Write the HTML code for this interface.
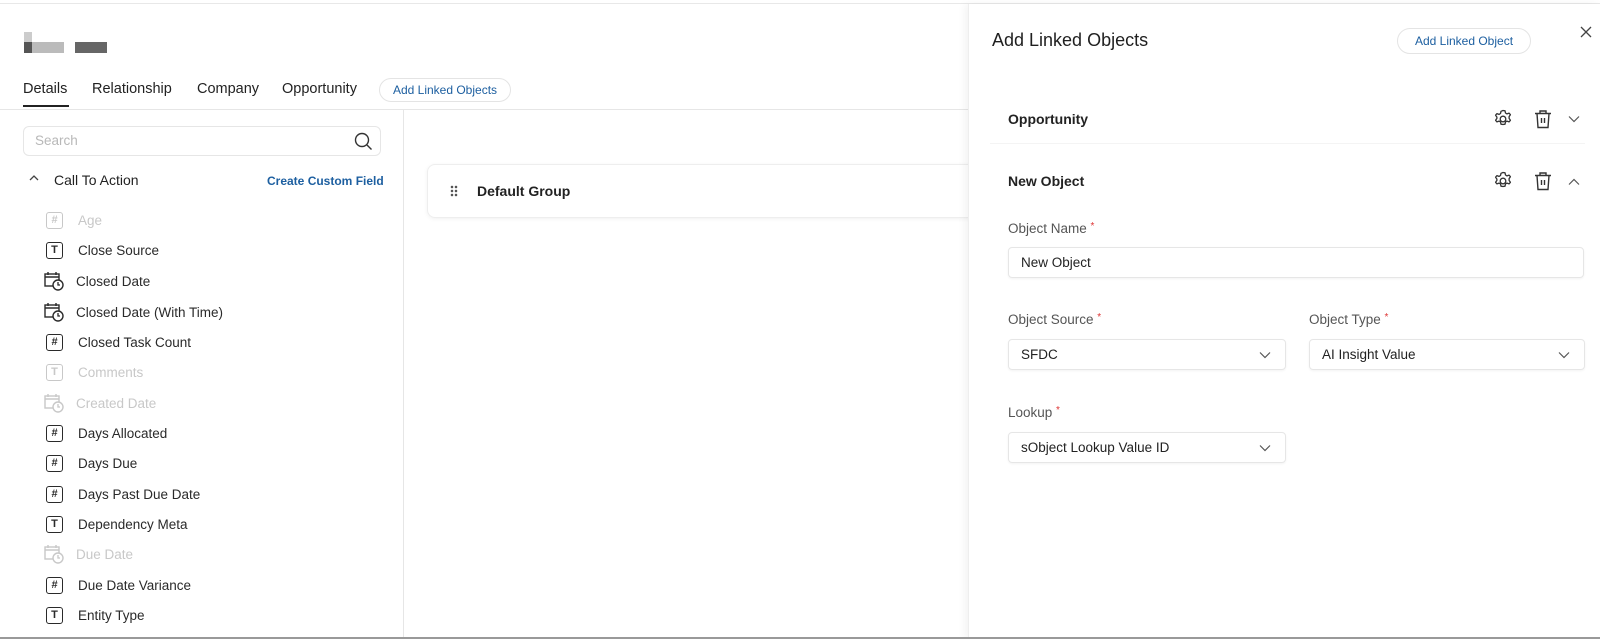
<!DOCTYPE html>
<html><head><meta charset="utf-8"><style>
*{margin:0;padding:0;box-sizing:border-box}
body{width:1600px;height:639px;overflow:hidden;background:#fff;font-family:"Liberation Sans",sans-serif;color:#1f1f1f;position:relative}
.a{position:absolute}
.tab{position:absolute;top:81px;font-size:14.5px;color:#222}
.item{position:absolute;left:46px;height:20px;display:flex;align-items:center;font-size:13.5px;color:#2a2a2a}
.item.dim{color:#c8c8c8}
.ic{width:17px;height:17px;border:1.5px solid currentColor;border-radius:3px;display:flex;align-items:center;justify-content:center;font-size:11px;font-weight:bold;margin-right:15px}
.cal{width:20px;height:20px;margin-right:12px;margin-left:-2px}
.lbl{position:absolute;font-size:13.5px;color:#555}
.lbl b{color:#d33;font-weight:normal;font-size:10px;vertical-align:top}
.inp{position:absolute;height:31px;border:1px solid #e6e6e6;border-radius:4px;font-size:13.5px;color:#222;padding-left:12px;line-height:29px;box-shadow:0 1px 2px rgba(0,0,0,.05)}
.chev{position:absolute;right:14px;top:11px}
</style></head><body>
<div class="a" style="left:0;top:3px;width:1600px;height:1px;background:#e8e8e8"></div>
<div class="a" style="left:24px;top:32px;width:8px;height:21px;background:#ccc"></div>
<div class="a" style="left:24px;top:42px;width:8px;height:11px;background:#555"></div>
<div class="a" style="left:32px;top:42px;width:32px;height:11px;background:#bbb"></div>
<div class="a" style="left:75px;top:42px;width:32px;height:11px;background:#666"></div>
<div class="tab" style="left:23px">Details</div>
<div class="a" style="left:23px;top:105px;width:46px;height:2px;background:#222"></div>
<div class="tab" style="left:92px">Relationship</div>
<div class="tab" style="left:197px">Company</div>
<div class="tab" style="left:282px">Opportunity</div>
<div class="a" style="left:379px;top:78px;width:132px;height:24px;border:1px solid #e4e4e4;border-radius:12px;font-size:12px;color:#1d5fa0;text-align:center;line-height:22px">Add Linked Objects</div>
<div class="a" style="left:0;top:109px;width:970px;height:1px;background:#e6e6e6"></div>
<div class="a" style="left:403px;top:110px;width:1px;height:529px;background:#e6e6e6"></div>
<div class="a" style="left:23px;top:126px;width:358px;height:30px;border:1px solid #e6e6e6;border-radius:6px;font-size:13.5px;color:#b8b8b8;padding-left:11px;line-height:28px">Search
<svg class="a" style="right:7px;top:5px" width="19" height="19" viewBox="0 0 19 19"><circle cx="8" cy="8" r="6.5" fill="none" stroke="#333" stroke-width="1.4"/><path d="M13 13l4.5 4.5" stroke="#333" stroke-width="1.4"/></svg></div>
<svg class="a" style="left:29px;top:174px" width="10" height="8"><path d="M1 6l4-4 4 4" fill="none" stroke="#444" stroke-width="1.3"/></svg>
<div class="a" style="left:54px;top:172px;font-size:14px;color:#222">Call To Action</div>
<div class="a" style="left:267px;top:174px;font-size:12px;color:#1d5fa0;font-weight:bold">Create Custom Field</div>

<div class="item dim" style="top:210px"><span class="ic">#</span>Age</div>
<div class="item" style="top:240px"><span class="ic">T</span>Close Source</div>
<div class="item" style="top:271px"><svg class="cal" viewBox="0 0 20 20"><rect x="1" y="3" width="14" height="12" fill="none" stroke="currentColor" stroke-width="1.4"/><path d="M1 6h14M4 1v3M12 1v3" stroke="currentColor" stroke-width="1.4"/><circle cx="14" cy="14" r="5" fill="#fff" stroke="currentColor" stroke-width="1.4"/><path d="M14 11v3h2" fill="none" stroke="currentColor" stroke-width="1.3"/></svg>Closed Date</div>
<div class="item" style="top:302px"><svg class="cal" viewBox="0 0 20 20"><rect x="1" y="3" width="14" height="12" fill="none" stroke="currentColor" stroke-width="1.4"/><path d="M1 6h14M4 1v3M12 1v3" stroke="currentColor" stroke-width="1.4"/><circle cx="14" cy="14" r="5" fill="#fff" stroke="currentColor" stroke-width="1.4"/><path d="M14 11v3h2" fill="none" stroke="currentColor" stroke-width="1.3"/></svg>Closed Date (With Time)</div>
<div class="item" style="top:332px"><span class="ic">#</span>Closed Task Count</div>
<div class="item dim" style="top:362px"><span class="ic">T</span>Comments</div>
<div class="item dim" style="top:393px"><svg class="cal" viewBox="0 0 20 20"><rect x="1" y="3" width="14" height="12" fill="none" stroke="currentColor" stroke-width="1.4"/><path d="M1 6h14M4 1v3M12 1v3" stroke="currentColor" stroke-width="1.4"/><circle cx="14" cy="14" r="5" fill="#fff" stroke="currentColor" stroke-width="1.4"/><path d="M14 11v3h2" fill="none" stroke="currentColor" stroke-width="1.3"/></svg>Created Date</div>
<div class="item" style="top:423px"><span class="ic">#</span>Days Allocated</div>
<div class="item" style="top:453px"><span class="ic">#</span>Days Due</div>
<div class="item" style="top:484px"><span class="ic">#</span>Days Past Due Date</div>
<div class="item" style="top:514px"><span class="ic">T</span>Dependency Meta</div>
<div class="item dim" style="top:544px"><svg class="cal" viewBox="0 0 20 20"><rect x="1" y="3" width="14" height="12" fill="none" stroke="currentColor" stroke-width="1.4"/><path d="M1 6h14M4 1v3M12 1v3" stroke="currentColor" stroke-width="1.4"/><circle cx="14" cy="14" r="5" fill="#fff" stroke="currentColor" stroke-width="1.4"/><path d="M14 11v3h2" fill="none" stroke="currentColor" stroke-width="1.3"/></svg>Due Date</div>
<div class="item" style="top:575px"><span class="ic">#</span>Due Date Variance</div>
<div class="item" style="top:605px"><span class="ic">T</span>Entity Type</div>

<div class="a" style="left:427px;top:164px;width:560px;height:54px;border:1px solid #eee;border-radius:8px;box-shadow:0 1px 4px rgba(0,0,0,.06)"></div>
<div class="a" style="left:450px;top:185px;width:8px;height:12px;background-image:radial-gradient(circle,#555 1.2px,transparent 1.4px);background-size:4px 4px"></div>
<div class="a" style="left:477px;top:183px;font-size:14px;font-weight:bold;color:#222">Default Group</div>

<div class="a" style="left:968px;top:4px;width:632px;height:635px;background:#fff;border-left:1px solid #eee;box-shadow:-3px 0 8px rgba(0,0,0,.05)"></div>
<div class="a" style="left:992px;top:30px;font-size:18px;color:#1f1f1f">Add Linked Objects</div>
<div class="a" style="left:1397px;top:28px;width:134px;height:26px;border:1px solid #e4e4e4;border-radius:13px;font-size:12px;color:#1d5fa0;text-align:center;line-height:24px">Add Linked Object</div>
<svg class="a" style="left:1580px;top:26px" width="12" height="12"><path d="M1 1l10 10M11 1L1 11" stroke="#444" stroke-width="1.3"/></svg>

<div class="a" style="left:1008px;top:111px;font-size:14px;font-weight:bold;color:#222">Opportunity</div>
<div class="a" style="left:990px;top:143px;width:595px;height:1px;background:#f4f4f4"></div>
<div class="a" style="left:1008px;top:173px;font-size:14px;font-weight:bold;color:#222">New Object</div>

<svg class="a" style="left:1493px;top:109px" width="20" height="20" viewBox="0 0 20 20"><path d="M10 1.5l2 .3.5 2.2 1.5.9 2.1-.8 1.3 1.6-1.3 1.9v1.8l1.3 1.9-1.3 1.6-2.1-.8-1.5.9-.5 2.2-2 .3-2-.3-.5-2.2-1.5-.9-2.1.8-1.3-1.6 1.3-1.9V8.1L2.6 6.2l1.3-1.6 2.1.8L7.5 4.5 8 2.3z" fill="none" stroke="#333" stroke-width="1.3" stroke-linejoin="round"/><circle cx="10" cy="10" r="2.8" fill="none" stroke="#333" stroke-width="1.3"/></svg>
<svg class="a" style="left:1493px;top:171px" width="20" height="20" viewBox="0 0 20 20"><path d="M10 1.5l2 .3.5 2.2 1.5.9 2.1-.8 1.3 1.6-1.3 1.9v1.8l1.3 1.9-1.3 1.6-2.1-.8-1.5.9-.5 2.2-2 .3-2-.3-.5-2.2-1.5-.9-2.1.8-1.3-1.6 1.3-1.9V8.1L2.6 6.2l1.3-1.6 2.1.8L7.5 4.5 8 2.3z" fill="none" stroke="#333" stroke-width="1.3" stroke-linejoin="round"/><circle cx="10" cy="10" r="2.8" fill="none" stroke="#333" stroke-width="1.3"/></svg>
<svg class="a" style="left:1533px;top:109px" width="20" height="20" viewBox="0 0 20 20"><path d="M2 4.5h16M7 4.5V2h6v2.5M4 4.5l1 14h10l1-14M8.5 9v5M11.5 9v5" fill="none" stroke="#333" stroke-width="1.4"/></svg>
<svg class="a" style="left:1533px;top:171px" width="20" height="20" viewBox="0 0 20 20"><path d="M2 4.5h16M7 4.5V2h6v2.5M4 4.5l1 14h10l1-14M8.5 9v5M11.5 9v5" fill="none" stroke="#333" stroke-width="1.4"/></svg>
<svg class="a" style="left:1568px;top:115px" width="12" height="8"><path d="M1 1.5l5 5 5-5" fill="none" stroke="#555" stroke-width="1.2"/></svg>
<svg class="a" style="left:1568px;top:178px" width="12" height="8"><path d="M1 6.5l5-5 5 5" fill="none" stroke="#555" stroke-width="1.2"/></svg>

<div class="lbl" style="left:1008px;top:221px">Object Name <b>*</b></div>
<div class="inp" style="left:1008px;top:247px;width:576px">New Object</div>
<div class="lbl" style="left:1008px;top:312px">Object Source <b>*</b></div>
<div class="inp" style="left:1008px;top:339px;width:278px">SFDC<svg class="chev" width="12" height="8"><path d="M1 1.5l5 5 5-5" fill="none" stroke="#555" stroke-width="1.2"/></svg></div>
<div class="lbl" style="left:1309px;top:312px">Object Type <b>*</b></div>
<div class="inp" style="left:1309px;top:339px;width:276px">AI Insight Value<svg class="chev" width="12" height="8"><path d="M1 1.5l5 5 5-5" fill="none" stroke="#555" stroke-width="1.2"/></svg></div>
<div class="lbl" style="left:1008px;top:405px">Lookup <b>*</b></div>
<div class="inp" style="left:1008px;top:432px;width:278px">sObject Lookup Value ID<svg class="chev" width="12" height="8"><path d="M1 1.5l5 5 5-5" fill="none" stroke="#555" stroke-width="1.2"/></svg></div>
<div class="a" style="left:0;top:637px;width:1600px;height:2px;background:#999"></div>
</body></html>
